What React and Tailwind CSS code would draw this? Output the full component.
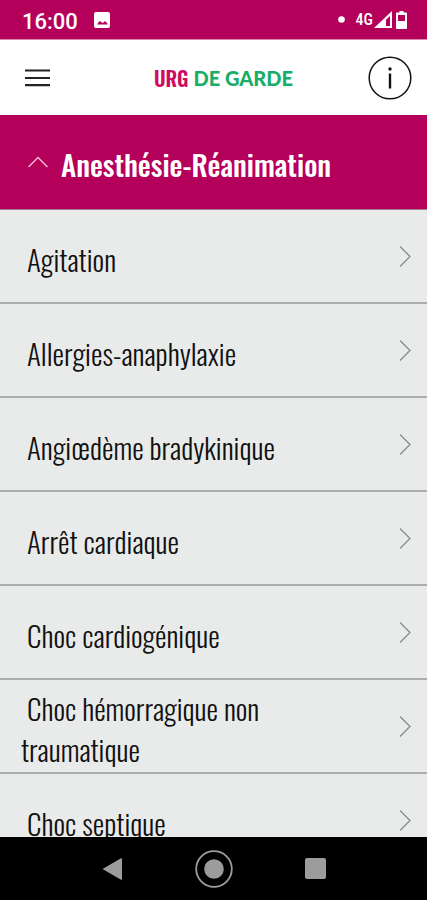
import React, { useState } from 'react';

const FICHES = [
  'Agitation',
  'Allergies-anaphylaxie',
  'Angiœdème bradykinique',
  'Arrêt cardiaque',
  'Choc cardiogénique',
  'Choc hémorragique non traumatique',
  'Choc septique',
];

function StatusBar() {
  return (
    <div className="h-10 shrink-0 bg-[#b5005b] text-white flex items-center justify-between pl-[22px] pr-5 border-b border-[#d98ab3] font-['Roboto',sans-serif]">
      <div className="flex items-center gap-4">
        <span className="text-[22px] leading-6 font-medium pt-1">16:00</span>
        <svg className="w-4 h-4" viewBox="0 0 16 16" aria-hidden="true">
          <path fill="currentColor" fillRule="evenodd" d="M2 0h12a2 2 0 0 1 2 2v12a2 2 0 0 1-2 2H2a2 2 0 0 1-2-2V2a2 2 0 0 1 2-2zM3 12.500h10.500v-1L11 9 9 11 5.500 9z" />
        </svg>
      </div>
      <div className="flex items-center">
        <svg className="w-[7px] h-[7px] mr-[11px]" viewBox="0 0 7 7" aria-hidden="true">
          <circle cx="3.500" cy="3.500" r="3.300" fill="currentColor" />
        </svg>
        <span className="text-base leading-5 font-['Roboto_Condensed','Liberation_Sans_Narrow',sans-serif] font-medium pt-px">4G</span>
        <svg className="w-[18px] h-[17px] ml-px mr-1" viewBox="0 0 18 17" aria-hidden="true">
          <path fill="currentColor" fillRule="evenodd" d="M0 17 18 0v17zM12 15h4V5l-4 3.800z" />
        </svg>
        <svg className="w-[11px] h-[18px]" viewBox="0 0 11 18" aria-hidden="true">
          <path fill="currentColor" fillRule="evenodd" d="M3.500 0h4v1.500H10a1 1 0 0 1 1 1V17a1 1 0 0 1-1 1H1a1 1 0 0 1-1-1V2.500a1 1 0 0 1 1-1h2.500zM2 4v6h7V4z" />
        </svg>
      </div>
    </div>
  );
}

function TopBar() {
  return (
    <header className="h-[75px] shrink-0 bg-white flex items-center justify-between pl-[25px] pr-[15px]">
      <button type="button" aria-label="Menu" className="w-11 h-11 flex items-center">
        <svg className="w-[25px] h-[18px]" viewBox="0 0 25 18" aria-hidden="true">
          <path stroke="#222" strokeWidth="2.200" d="M0 1.500h25M0 9h25M0 16.200h25" />
        </svg>
      </button>
      <div className="flex items-center gap-[5px] leading-6 pl-[10px]">
        <span className="text-[20px] text-[#cf0a60] font-['Oswald',sans-serif] font-semibold">URG</span>
        <span className="text-[20px] text-[#19ad6a] font-['Lato',sans-serif] font-black">DE GARDE</span>
      </div>
      <button type="button" aria-label="Informations" className="w-11 h-11">
        <svg className="w-11 h-11" viewBox="0 0 44 44" fill="none" aria-hidden="true">
          <circle cx="22" cy="22" r="20.800" stroke="#111" strokeWidth="1.500" />
          <path stroke="#111" strokeWidth="2.400" d="M22 17.500V32.500" />
          <circle cx="22" cy="13" r="1.700" fill="#111" />
        </svg>
      </button>
    </header>
  );
}

function NavBar() {
  return (
    <nav className="h-[63px] shrink-0 bg-black text-[#9c9c9c] flex items-center justify-center gap-[67px]">
      <button type="button" aria-label="Retour" className="w-8 h-10 flex items-center justify-center">
        <svg className="w-5 h-[22px]" viewBox="0 0 20 22" aria-hidden="true">
          <path fill="currentColor" d="M0.500 11 19 0.300q1-.4 1 .7v20q0 1.100-1 .7z" />
        </svg>
      </button>
      <button type="button" aria-label="Accueil" className="w-[38px] h-10 flex items-center justify-center">
        <svg className="w-[38px] h-[38px]" viewBox="0 0 38 38" aria-hidden="true">
          <circle cx="19" cy="19" r="17.800" fill="none" stroke="currentColor" strokeWidth="1.800" />
          <circle cx="19" cy="19" r="9.800" fill="currentColor" />
        </svg>
      </button>
      <button type="button" aria-label="Applications" className="w-8 h-10 flex items-center justify-center">
        <span className="w-[21px] h-[21px] bg-[#9c9c9c] rounded-xs" />
      </button>
    </nav>
  );
}

function App() {
  const [ouvert, setOuvert] = useState(true);

  return (
    <div className="h-screen flex flex-col bg-[#e9ebea]">
      <StatusBar />
      <TopBar />

      <main className="flex-1 min-h-0 overflow-y-auto [scrollbar-width:none] font-['Oswald',sans-serif]">
        <h1>
          <button
            type="button"
            aria-expanded={ouvert}
            onClick={() => setOuvert(!ouvert)}
            className="w-full h-[95px] bg-[#b5005b] text-white flex items-center gap-[13px] pl-7 pt-1 border-b border-[#a0808f]"
          >
            <svg className="w-5 h-3 mb-1" viewBox="0 0 20 12" fill="none" aria-hidden="true">
              <path stroke="#f3bcd5" strokeWidth="1.400" d="M.5 11 10 1.500 19.500 11" />
            </svg>
            <span className="text-[29px] leading-10 font-medium">Anesthésie-Réanimation</span>
          </button>
        </h1>

        {ouvert && (
          <ul>
            {FICHES.map((fiche) => (
              <li key={fiche}>
                <a href="#fiche" className="h-[94px] flex items-center justify-between pl-[21px] pr-4 border-b-2 border-[#abadac]">
                  <span className="text-[29px] leading-[41px] font-light text-[#111] indent-[6px] mr-10 pt-1">{fiche}</span>
                  <svg className="w-3 h-[21px] shrink-0" viewBox="0 0 12 21" fill="none" aria-hidden="true">
                    <path stroke="#8a8c8b" strokeWidth="1.300" d="M1 .5 11 10.500 1 20.500" />
                  </svg>
                </a>
              </li>
            ))}
          </ul>
        )}
      </main>

      <NavBar />
    </div>
  );
}

export default App;
